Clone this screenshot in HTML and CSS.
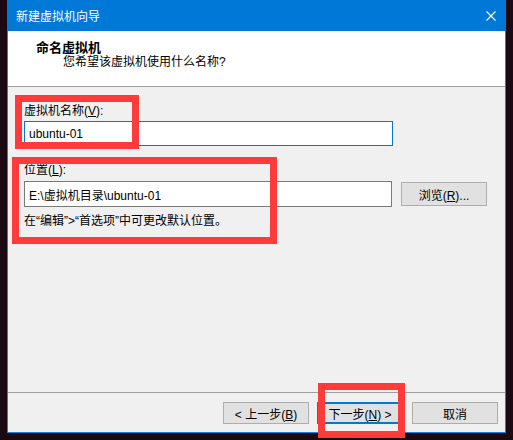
FILE: index.html
```html
<!DOCTYPE html>
<html lang="zh-CN">

<head>
  <meta charset="UTF-8">
  <title>新建虚拟机向导</title>
  <link rel="stylesheet" href="styles.css">
</head>

<body>
  <div class="wizard">
    <!-- Title bar -->
    <div class="titlebar">
      <span class="title">新建虚拟机向导</span>
      <svg class="close" width="10" height="10" viewBox="0 0 10 10">
        <path d="M0.5 0.5L9.5 9.5M9.5 0.5L0.5 9.5" stroke="#fff" stroke-width="1.1" fill="none" />
      </svg>
    </div>

    <!-- Page header -->
    <div class="header">
      <div class="header-title">命名虚拟机</div>
      <div class="header-sub">您希望该虚拟机使用什么名称?</div>
    </div>

    <!-- Form -->
    <div class="content">
      <label class="label first">虚拟机名称(<u>V</u>):</label>
      <input class="field focused" type="text" value="ubuntu-01">

      <label class="label">位置(<u>L</u>):</label>
      <div class="path-row">
        <input class="field" type="text" value="E:\虚拟机目录\ubuntu-01">
        <button class="btn browse">浏览(<u>R</u>)...</button>
      </div>
      <p class="hint">在“编辑”&gt;“首选项”中可更改默认位置。</p>
    </div>

    <!-- Footer buttons -->
    <div class="footer">
      <button class="btn">&lt; 上一步(<u>B</u>)</button>
      <button class="btn default">下一步(<u>N</u>) &gt;</button>
      <button class="btn cancel">取消</button>
    </div>
  </div>

  <!-- Red annotation boxes -->
  <div class="mark mark-name"></div>
  <div class="mark mark-location"></div>
  <div class="mark mark-next"></div>
</body>

</html>
```

FILE: styles.css
```css
/* Desktop behind the dialog */
body {
  margin: 0;
  padding: 0 0 0 7px;
  width: 513px;
  height: 440px;
  box-sizing: border-box;
  background: #1c0a13;
  font-family: "Liberation Sans", "Noto Sans CJK SC", sans-serif;
  font-size: 12px;
  color: #000;
  overflow: hidden;
}

/* Dialog window */
.wizard {
  width: 499px;
  height: 433px;
  box-sizing: border-box;
  border: 1px solid #1883d7;
  border-top: none;
  display: flex;
  flex-direction: column;
  background: #f0f0f0;
}

.titlebar {
  height: 31px;
  margin: 0 -1px;
  padding: 0 10px 0 9px;
  background: #0078d7;
  display: flex;
  align-items: center;
  justify-content: space-between;
  flex-shrink: 0;
}

.title {
  color: #fff;
  font-family: "Noto Sans CJK SC", sans-serif;
  font-size: 12px;
  line-height: 16px;
}

/* Header */
.header {
  height: 56px;
  box-sizing: border-box;
  padding: 9px 0 0 28px;
  background: #fff;
  border-bottom: 1px solid #a0a0a0;
  flex-shrink: 0;
}

.header-title {
  font-weight: bold;
  font-size: 13px;
  line-height: 15px;
}

.header-sub {
  padding-left: 27px;
  line-height: 15px;
}

/* Form area */
.content {
  flex: 1;
  padding: 0 0 0 16px;
  display: flex;
  flex-direction: column;
  align-items: flex-start;
}

.label {
  display: block;
  line-height: 16px;
  margin: 16px 0 2px;
}

.label + .path-row {
  margin-top: 1px;
}

.field {
  width: 368px;
  height: 26px;
  box-sizing: border-box;
  margin: 0;
  padding: 0 4px;
  border: 1px solid #7a7a7a;
  background: #fff;
  font-family: "Liberation Sans", "Noto Sans CJK SC", sans-serif;
  font-size: 12px;
  color: #000;
  outline: none;
}

.field.focused {
  width: 369px;
  height: 25px;
  border-color: #0078d7;
}

.path-row {
  display: flex;
  align-items: center;
  gap: 9px;
}

.hint {
  margin: 6px 0 0;
  line-height: 16px;
}

/* Buttons */
.btn {
  width: 86px;
  height: 22px;
  box-sizing: border-box;
  padding: 0;
  border: 1px solid #adadad;
  background: #e1e1e1;
  font-family: "Liberation Sans", "Noto Sans CJK SC", sans-serif;
  font-size: 12px;
  color: #000;
}

.btn.browse {
  height: 24px;
}

.btn.default {
  border: 2px solid #0078d7;
}

.footer {
  height: 40px;
  box-sizing: border-box;
  border-top: 1px solid #a0a0a0;
  padding: 9px 7px 0 0;
  display: flex;
  justify-content: flex-end;
  align-items: flex-start;
  gap: 8px;
  flex-shrink: 0;
}

.btn.cancel {
  margin-left: 1px;
}

/* Red annotation boxes over the dialog */
.mark {
  position: absolute;
  border: 7px solid #fe3b3b;
  box-sizing: border-box;
}

.mark-name {
  left: 15px;
  top: 95px;
  width: 124px;
  height: 54px;
}

.mark-location {
  left: 12px;
  top: 157px;
  width: 265px;
  height: 87px;
}

.mark-next {
  left: 318px;
  top: 383px;
  width: 87px;
  height: 55px;
}
```
